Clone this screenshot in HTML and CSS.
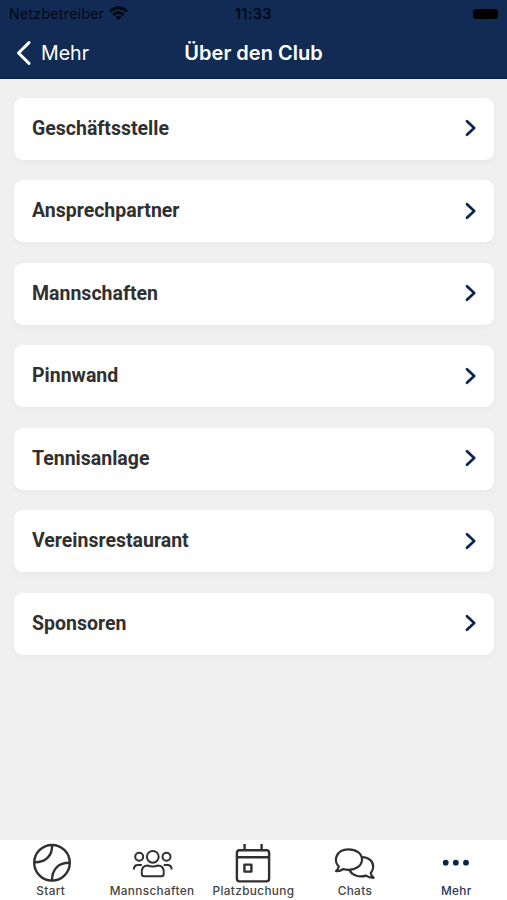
FILE: index.html
```
<!DOCTYPE html>
<html lang="de">
<head>
<meta charset="utf-8">
<title>Über den Club</title>
<link rel="stylesheet" href="styles.css">
</head>
<body>
<header class="header">
  <div class="status">
    <div class="carrier"><span class="carrier-name">Netzbetreiber</span>
      <svg class="wifi" width="19" height="15" viewBox="0 0 18 14" fill="none" stroke="#020712" stroke-width="2.7"><path d="M1 5.1Q9-2 17 5.1M4.1 8.3Q9 4 13.9 8.3"/><path d="M9 13.2 6.2 10.3Q9 8 11.8 10.3Z" fill="#020712" stroke="none"/></svg>
    </div>
    <span class="time">11:33</span>
    <div class="power"><span class="battery"></span></div>
  </div>
  <div class="navbar">
    <a class="back"><svg width="16" height="26" viewBox="0 0 16 26" fill="none" stroke="#fff" stroke-width="3" stroke-linecap="round" stroke-linejoin="round"><path d="M13 2.6 2.5 13 13 23.4"/></svg><span class="back-label">Mehr</span></a>
    <h1 class="title">Über den Club</h1>
    <span></span>
  </div>
</header>
<main class="list">
  <a class="card"><span class="name">Geschäftsstelle</span><svg class="chevron" viewBox="0 0 12 18"><path d="M2 2.2 9.2 9 2 15.8"/></svg></a>
  <a class="card"><span class="name">Ansprechpartner</span><svg class="chevron" viewBox="0 0 12 18"><path d="M2 2.2 9.2 9 2 15.8"/></svg></a>
  <a class="card"><span class="name">Mannschaften</span><svg class="chevron" viewBox="0 0 12 18"><path d="M2 2.2 9.2 9 2 15.8"/></svg></a>
  <a class="card"><span class="name">Pinnwand</span><svg class="chevron" viewBox="0 0 12 18"><path d="M2 2.2 9.2 9 2 15.8"/></svg></a>
  <a class="card"><span class="name">Tennisanlage</span><svg class="chevron" viewBox="0 0 12 18"><path d="M2 2.2 9.2 9 2 15.8"/></svg></a>
  <a class="card"><span class="name">Vereinsrestaurant</span><svg class="chevron" viewBox="0 0 12 18"><path d="M2 2.2 9.2 9 2 15.8"/></svg></a>
  <a class="card"><span class="name">Sponsoren</span><svg class="chevron" viewBox="0 0 12 18"><path d="M2 2.2 9.2 9 2 15.8"/></svg></a>
</main>
<nav class="tabs">
  <a class="tab">
    <svg class="icon" viewBox="0 0 60 43"><circle cx="31" cy="22.8" r="17.8"/><path d="M31 5C31.5 15.5 25 22.5 13.2 22.3M31 40.6C31 29.5 37 22.8 48.8 22.8"/></svg>
    <span class="label">Start</span>
  </a>
  <a class="tab">
    <svg class="icon people" viewBox="0 0 60 43"><circle cx="30.8" cy="16.8" r="5.9"/><circle cx="17.2" cy="16.8" r="4"/><circle cx="44.5" cy="16.8" r="4"/><path d="M19.8 34Q19 25.5 25.5 25.5Q30.8 27.5 36 25.5Q42.5 25.5 41.7 34Q41.7 36.3 39.3 36.3H22.3Q19.8 36.3 19.8 34ZM11.9 29.4Q12 24.9 16 24.9H19.8M49.6 29.4Q49.5 24.9 45.5 24.9H41.7"/></svg>
    <span class="label">Mannschaften</span>
  </a>
  <a class="tab">
    <svg class="icon" viewBox="0 0 60 43"><rect x="13.9" y="10.2" width="32.2" height="31.2" rx="2.6"/><path d="M14 17.3H46M21.6 4V10.4M38.6 4V10.4"/><rect x="21.4" y="24.6" width="7" height="7"/></svg>
    <span class="label">Platzbuchung</span>
  </a>
  <a class="tab">
    <svg class="icon chat" viewBox="0 0 60 43"><path d="M13.8 26.4C11 23.5 10.3 19.8 11.5 16.5C13.2 11.8 18 9.3 23.5 9.3C31.2 9.3 37 13.7 37 19.5C37 25.5 31.2 29.8 23.5 29.8C21.7 29.8 20 29.5 18.5 29C16.5 30.4 13.9 31.3 11 31.1Q13.2 29.3 13.8 26.4Z"/><path d="M36.8 17.2C43.7 17.2 48.2 21.2 48.2 26.5C48.2 29.2 47.2 31.4 45.7 33.2Q46.3 35.8 48.6 37.8C45.5 37.8 43.1 37.1 41 35.6C34.6 37.6 27.4 35.8 24.3 30"/></svg>
    <span class="label">Chats</span>
  </a>
  <a class="tab active">
    <svg class="icon dots" viewBox="0 0 60 43"><circle cx="19.7" cy="22.7" r="2.9"/><circle cx="29.8" cy="22.7" r="2.9"/><circle cx="40" cy="22.7" r="2.9"/></svg>
    <span class="label">Mehr</span>
  </a>
</nav>
</body>
</html>
```
FILE: styles.css
```
* { box-sizing: border-box; }
body {
  margin: 0;
  height: 900px;
  display: flex;
  flex-direction: column;
  overflow: hidden;
  background: #f0f0f0;
  font-family: Inter, "Liberation Sans", sans-serif;
}
.header {
  height: 79px;
  flex: none;
  background: #112b54;
  border-bottom: 1px solid #092148;
}
.status {
  height: 27px;
  display: grid;
  grid-template-columns: 1fr auto 1fr;
  align-items: center;
  padding: 0 9px;
  color: #020712;
  font-size: 14px;
}
.carrier { display: flex; align-items: center; gap: 5px; }
.carrier-name { font-size: 14px; letter-spacing: 0.35px; }
.wifi { margin-top: -1px; }
.time { font-size: 14px; font-weight: 600; letter-spacing: 0.6px; }
.power { display: flex; justify-content: flex-end; }
.battery { width: 25px; height: 10px; border-radius: 3px; background: #000; }
.navbar {
  height: 51px;
  display: grid;
  grid-template-columns: 1fr auto 1fr;
  align-items: center;
  padding: 0 16px;
  color: #fff;
}
.back { display: flex; align-items: center; gap: 9px; }
.back-label { font-size: 19.6px; }
.title { margin: 0; font-size: 20px; font-weight: 600; }
.list {
  flex: 1;
  display: flex;
  flex-direction: column;
  gap: 20.5px;
  padding: 18.5px 13px 0 14px;
}
.card {
  height: 62px;
  display: flex;
  align-items: center;
  justify-content: space-between;
  padding: 0 17px 0 18px;
  border-radius: 9px;
  background: #fff;
  box-shadow: 0 3px 7px rgba(0, 0, 0, 0.03);
}
.name { font: 700 19.5px/24px Roboto, sans-serif; color: #303030; }
.chevron {
  width: 12px;
  height: 18px;
  margin-bottom: 1px;
  fill: none;
  stroke: #0b2550;
  stroke-width: 2.7;
  stroke-linecap: round;
  stroke-linejoin: round;
}
.tabs {
  height: 60px;
  flex: none;
  display: grid;
  grid-template-columns: repeat(5, 1fr);
  background: #fff;
}
.tab { display: flex; flex-direction: column; align-items: center; color: #444; }
.icon {
  width: 60px;
  height: 43px;
  flex: none;
  fill: none;
  stroke: #303030;
  stroke-width: 2.4;
  stroke-linejoin: round;
}
.people { stroke-width: 2; }
.chat { stroke-width: 2.2; }
.dots { fill: #0b2550; stroke: none; }
.label { font-size: 11.8px; line-height: 17px; font-weight: 550; letter-spacing: 0.35px; }
.active { color: #24365f; }
```
